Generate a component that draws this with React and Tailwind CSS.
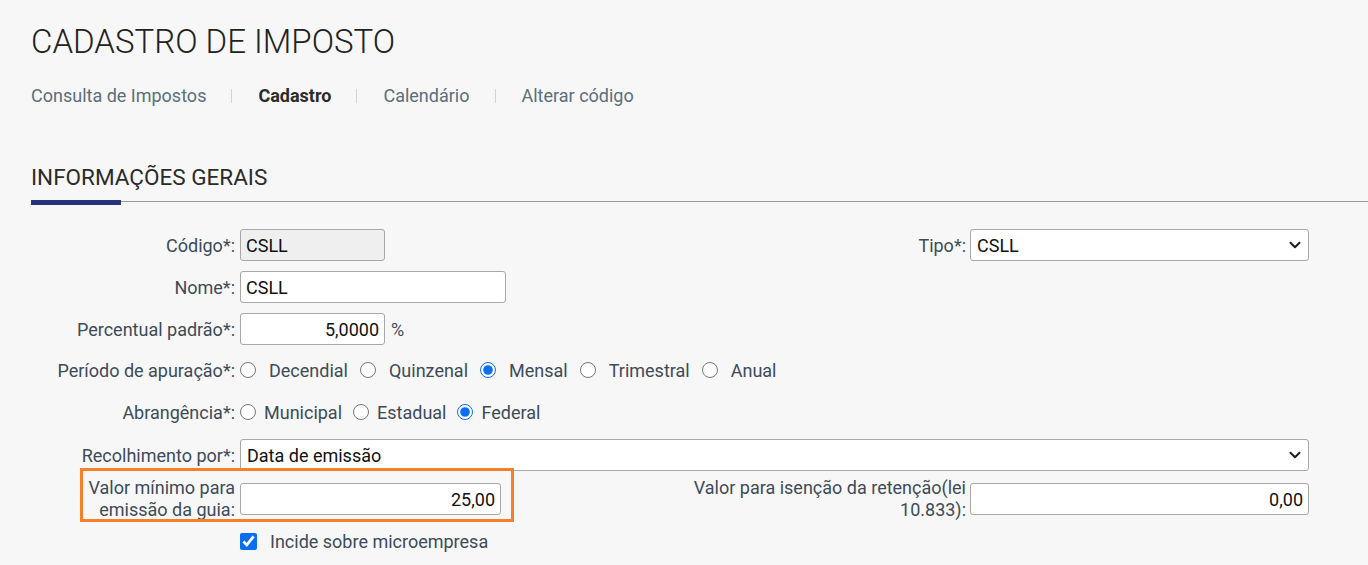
import { useState } from "react";

const font = { fontFamily: "Roboto, 'Noto Sans', sans-serif" };

function Chevron() {
    return (
        <svg className="pointer-events-none absolute right-[7px] top-1/2 -translate-y-1/2" width="14" height="14" viewBox="0 0 14 14" fill="none">
            <path d="M2.5 4.8 L7 9.3 L11.5 4.8" stroke="#1f1f1f" strokeWidth="2" strokeLinecap="round" strokeLinejoin="round" />
        </svg>
    );
}

function Select({ value, className }) {
    return (
        <div className={"relative h-8 " + className}>
            <select
                defaultValue={value}
                className="h-full w-full appearance-none rounded-[3px] border border-[#a8a8a8] bg-white pl-[6px] pr-8 text-[18px] text-[#111] outline-none"
            >
                <option>{value}</option>
            </select>
            <Chevron />
        </div>
    );
}

function Label({ children, className = "" }) {
    return (
        <label className={"w-[209px] shrink-0 pr-[5px] text-right text-[18px] text-[#3d4b58] " + className}>
            {children}
        </label>
    );
}

function Radio({ name, label, checked, gap }) {
    return (
        <label className="flex items-center text-[18px] text-[#3d4b58]">
            <input
                type="radio"
                name={name}
                defaultChecked={checked}
                className="m-0 h-4 w-4 accent-[#0a6ef0]"
            />
            <span className={gap}>{label}</span>
        </label>
    );
}

export default function App() {
    const [tab] = useState("Cadastro");
    const tabs = ["Consulta de Impostos", "Cadastro", "Calendário", "Alterar código"];

    return (
        <div className="min-h-screen bg-[#f7f7f7] pl-[31px] pt-[22px]" style={font}>
            <h1 className="text-[33px] font-light leading-[40px] text-[#222]">CADASTRO DE IMPOSTO</h1>

            {/* abas */}
            <nav className="mt-[22px] flex items-center text-[18px] leading-[24px]">
                {tabs.map((t, i) => (
                    <div key={t} className="flex items-center">
                        {i > 0 && <span className="ml-[25px] mr-[26px] h-[14px] w-px bg-[#d3d3d3]" />}
                        <span className={t === tab ? "font-bold text-[#2b2b2b]" : "text-[#5b6e7c]"}>{t}</span>
                    </div>
                ))}
            </nav>

            <h2 className="mt-[55px] text-[22.5px] leading-[28px] text-[#2b2b2b]">INFORMAÇÕES GERAIS</h2>
            <div className="relative mt-[9px] h-[5px]">
                <div className="absolute left-0 right-0 top-[1px] h-px bg-[#9a9a9a]" />
                <div className="absolute left-0 top-0 h-[5px] w-[90px] bg-[#27337f]" />
            </div>

            <form className="mt-[24px] flex w-[1278px] flex-col">
                <div className="flex h-8 items-center justify-between">
                    <div className="flex items-center">
                        <Label>Código*:</Label>
                        <input
                            readOnly
                            value="CSLL"
                            className="h-8 w-[145px] rounded-[3px] border border-[#a8a8a8] bg-[#efefef] px-[5px] text-[18px] text-[#111] outline-none"
                        />
                    </div>
                    <div className="flex items-center">
                        <label className="pr-[4px] text-[18px] text-[#3d4b58]">Tipo*:</label>
                        <Select value="CSLL" className="w-[339px]" />
                    </div>
                </div>

                <div className="mt-[10px] flex h-8 items-center">
                    <Label>Nome*:</Label>
                    <input
                        defaultValue="CSLL"
                        className="h-8 w-[266px] rounded-[3px] border border-[#a8a8a8] bg-white px-[5px] text-[18px] text-[#111] outline-none"
                    />
                </div>

                <div className="mt-[10px] flex h-8 items-center">
                    <Label>Percentual padrão*:</Label>
                    <input
                        defaultValue="5,0000"
                        className="h-8 w-[145px] rounded-[3px] border border-[#a8a8a8] bg-white px-[5px] text-right text-[18px] text-[#111] outline-none"
                    />
                    <span className="ml-[6px] text-[18px] text-[#3d4b58]">%</span>
                </div>

                <div className="mt-[10px] flex h-[30px] items-center">
                    <Label>Período de apuração*:</Label>
                    <div className="flex items-center gap-[12px]">
                        <Radio name="periodo" label="Decendial" gap="ml-[13px]" />
                        <Radio name="periodo" label="Quinzenal" gap="ml-[13px]" />
                        <Radio name="periodo" label="Mensal" gap="ml-[13px]" checked />
                        <Radio name="periodo" label="Trimestral" gap="ml-[13px]" />
                        <Radio name="periodo" label="Anual" gap="ml-[13px]" />
                    </div>
                </div>

                <div className="mt-[12px] flex h-[30px] items-center">
                    <Label>Abrangência*:</Label>
                    <div className="flex items-center gap-[11px]">
                        <Radio name="abrangencia" label="Municipal" gap="ml-[8px]" />
                        <Radio name="abrangencia" label="Estadual" gap="ml-[8px]" />
                        <Radio name="abrangencia" label="Federal" gap="ml-[8px]" checked />
                    </div>
                </div>

                <div className="mt-[12px] flex h-8 items-center">
                    <Label>Recolhimento por*:</Label>
                    <Select value="Data de emissão" className="flex-1" />
                </div>

                <div className="mt-[6px] flex h-[44px] items-center justify-between">
                    <div className="relative flex items-center">
                        <Label className="leading-[22px]">Valor mínimo para emissão da guia:</Label>
                        <input
                            defaultValue="25,00"
                            className="h-8 w-[261px] rounded-[3px] border border-[#a8a8a8] bg-white px-[5px] text-right text-[18px] text-[#111] outline-none"
                        />
                        {/* destaque */}
                        <div className="pointer-events-none absolute left-[49px] top-[-9px] h-[54px] w-[434px] border-[3px] border-[#f5802a]" />
                    </div>
                    <div className="flex items-center">
                        <label className="w-[280px] pr-[4px] text-right text-[18px] leading-[22px] text-[#3d4b58]">
                            Valor para isenção da retenção(lei 10.833):
                        </label>
                        <input
                            defaultValue="0,00"
                            className="h-8 w-[339px] rounded-[3px] border border-[#a8a8a8] bg-white px-[5px] text-right text-[18px] text-[#111] outline-none"
                        />
                    </div>
                </div>

                <div className="mt-[10px] flex h-5 items-center">
                    <div className="w-[209px] shrink-0" />
                    <label className="flex items-center text-[18px] text-[#3d4b58]">
                        <input type="checkbox" defaultChecked className="m-0 h-[17px] w-[17px] accent-[#0a6ef0]" />
                        <span className="ml-[13px]">Incide sobre microempresa</span>
                    </label>
                </div>
            </form>
        </div>
    );
}
